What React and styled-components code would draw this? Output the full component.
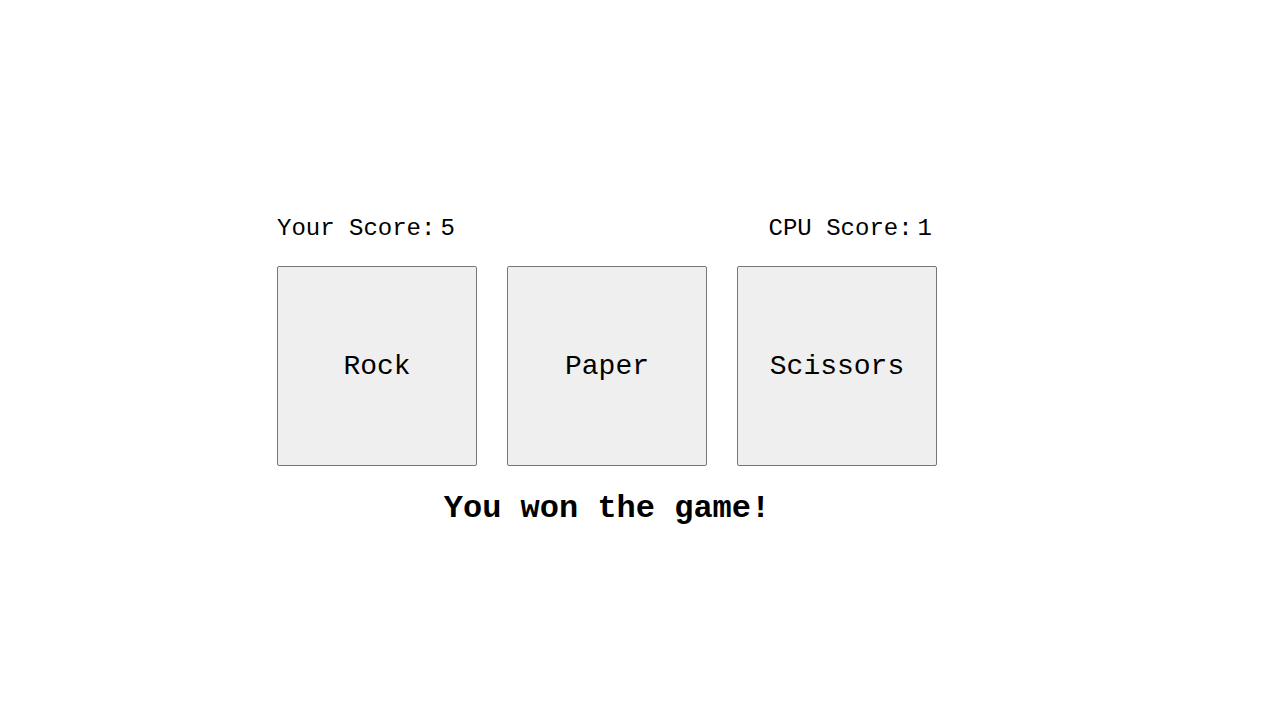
import React, { useState } from 'react';
import styled, { createGlobalStyle } from 'styled-components';

const GlobalStyle = createGlobalStyle`
  html, body {
    margin: 0;
    padding: 0;
    background: #fff;
  }
  body {
    font-family: "Liberation Mono", "DejaVu Sans Mono", monospace;
    color: #000;
  }
`;

const choices = ['Rock', 'Paper', 'Scissors'];

const App = () => {
  const [score] = useState({ you: 5, cpu: 1 });

  return (
    <>
      <GlobalStyle />
      <Page>
        <Game>
          <ScoreRow>
            <Score>
              <span>Your Score:</span>
              <Points>{score.you}</Points>
            </Score>
            <Score>
              <span>CPU Score:</span>
              <Points>{score.cpu}</Points>
            </Score>
          </ScoreRow>
          <Choices>
            {choices.map((c) => (
              <Choice key={c}>{c}</Choice>
            ))}
          </Choices>
          <Message>You won the game!</Message>
        </Game>
      </Page>
    </>
  );
};

const Page = styled.div`
  display: flex;
  justify-content: center;
  padding: 215px 66px 0 0;
  min-height: 100vh;
  box-sizing: border-box;
`;

const Game = styled.div`
  width: 660px;
  display: flex;
  flex-direction: column;
`;

const ScoreRow = styled.div`
  display: flex;
  justify-content: space-between;
  font-size: 24px;
  line-height: 27px;
`;

const Score = styled.div`
  display: flex;
`;

const Points = styled.span`
  margin: 0 5px;
`;

const Choices = styled.div`
  display: flex;
  gap: 30px;
  margin-top: 24px;
`;

const Choice = styled.button`
  width: 200px;
  height: 200px;
  padding: 0;
  background: #efefef;
  border: 1px solid #767676;
  border-radius: 2px;
  font-family: "Liberation Mono", "DejaVu Sans Mono", monospace;
  font-size: 28px;
  color: #000;
  cursor: pointer;
`;

const Message = styled.h1`
  margin: 25px 0 0;
  font-size: 32px;
  font-weight: bold;
  line-height: 36px;
  text-align: center;
`;

export default App;
